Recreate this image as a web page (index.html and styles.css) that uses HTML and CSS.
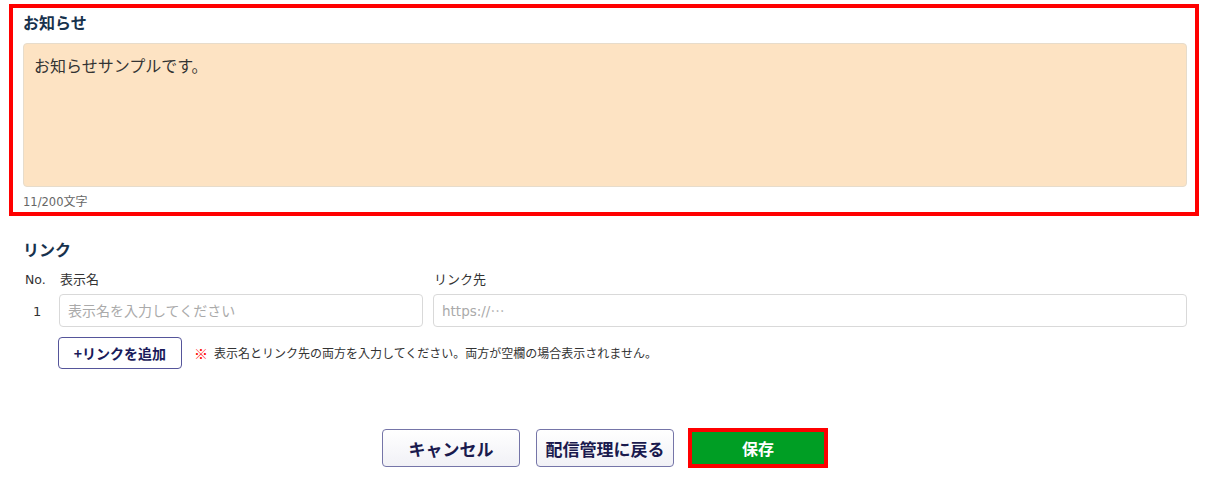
FILE: index.html
```html
<!DOCTYPE html>
<html lang="ja">
<head>
<meta charset="utf-8">
<title>お知らせ</title>
<link rel="stylesheet" href="styles.css">
</head>
<body>
<div class="page">
  <section class="notice">
    <h2 class="title">お知らせ</h2>
    <div class="textarea">お知らせサンプルです。</div>
    <div class="counter"><span class="latin">11/200</span>文字</div>
  </section>

  <section class="links">
    <h2 class="title">リンク</h2>
    <div class="grid">
      <div class="head no"><span class="latin">No.</span></div>
      <div class="head">表示名</div>
      <div class="head">リンク先</div>
      <div class="num"><span class="latin">1</span></div>
      <div class="input">表示名を入力してください</div>
      <div class="input"><span class="latin">https://</span>…</div>
    </div>
    <div class="add-row">
      <button class="btn-add">+リンクを追加</button>
      <span class="mark">※</span>
      <span class="note">表示名とリンク先の両方を入力してください。両方が空欄の場合表示されません。</span>
    </div>
  </section>

  <div class="actions">
    <button class="btn">キャンセル</button>
    <button class="btn">配信管理に戻る</button>
    <button class="btn-save">保存</button>
  </div>
</div>
</body>
</html>
```

FILE: styles.css
```css
* { box-sizing: border-box; }
html, body { margin: 0; padding: 0; background: #fff; }
body {
  font-family: "Noto Sans CJK JP", sans-serif;
  color: #333;
  width: 1210px;
  height: 486px;
  overflow: hidden;
}
.latin {
  font-family: "DejaVu Sans", "Noto Sans CJK JP", sans-serif;
  line-height: 1;
}
.page { padding-top: 4px; }

.notice {
  margin-left: 9px;
  width: 1190px;
  height: 212px;
  border: 4px solid #ff0000;
  padding: 2px 8px 0 10px;
}
.title {
  margin: 0;
  font-size: 16px;
  line-height: 24px;
  font-weight: bold;
  color: #17324d;
}
.notice .title { margin-bottom: 9px; }
.textarea {
  height: 144px;
  background: #fde3c3;
  border: 1px solid #e7dccb;
  border-radius: 4px;
  padding: 9px 10px;
  font-size: 16px;
  line-height: 24px;
  color: #333;
}
.counter {
  font-size: 12px;
  line-height: 18px;
  height: 18px;
  margin-top: 5px;
  color: #666;
}
.counter .latin { font-size: 11.5px; }

.links {
  margin-top: 21px;
  padding-left: 23px;
  width: 1187px;
}
.grid {
  margin-top: 9px;
  display: grid;
  grid-template-columns: 36px 364px 764px;
  grid-template-rows: 18px 33px;
  column-gap: 0;
  row-gap: 6px;
}
.grid > :nth-child(3), .grid > :nth-child(6) { margin-left: 10px; }
.head {
  font-size: 13px;
  line-height: 18px;
  color: #333;
  padding-left: 1px;
}
.head.no { padding-left: 2px; font-size: 12.5px; }
.num {
  font-size: 13px;
  line-height: 33px;
  padding-left: 10px;
  color: #333;
}
.input {
  height: 33px;
  border: 1px solid #d9d9d9;
  border-radius: 4px;
  padding: 0 8px;
  font-size: 14px;
  line-height: 31px;
  color: #aaa;
  background: #fff;
}
.input .latin { font-size: 13.5px; }
.add-row {
  display: flex;
  align-items: center;
  height: 32px;
  margin-top: 10px;
  padding-left: 35px;
}
.btn-add {
  width: 124px;
  height: 32px;
  border: 1px solid #55559a;
  border-radius: 4px;
  background: #fff;
  font-family: inherit;
  font-size: 14px;
  font-weight: bold;
  color: #1a1a5a;
  padding: 0;
}
.mark {
  margin-left: 12px;
  color: #ff0000;
  font-weight: 900;
  font-size: 14px;
  line-height: 18px;
}
.note {
  margin-left: 6px;
  font-size: 12px;
  line-height: 18px;
  color: #333;
}

.actions {
  margin-top: 59px;
  display: flex;
  justify-content: center;
  align-items: center;
  gap: 16px;
}
.btn {
  width: 138px;
  height: 38px;
  border: 1px solid #7575a8;
  border-radius: 4px;
  background: linear-gradient(#ffffff, #f1f1f6);
  font-family: inherit;
  font-size: 17px;
  font-weight: bold;
  color: #1a1a4e;
  padding: 0;
}
.btn-save {
  margin-left: -2px;
  width: 140px;
  height: 40px;
  border: 4px solid #ff0000;
  background: #009e24;
  font-family: inherit;
  font-size: 16px;
  font-weight: bold;
  color: #fff;
  padding: 0;
}
```
